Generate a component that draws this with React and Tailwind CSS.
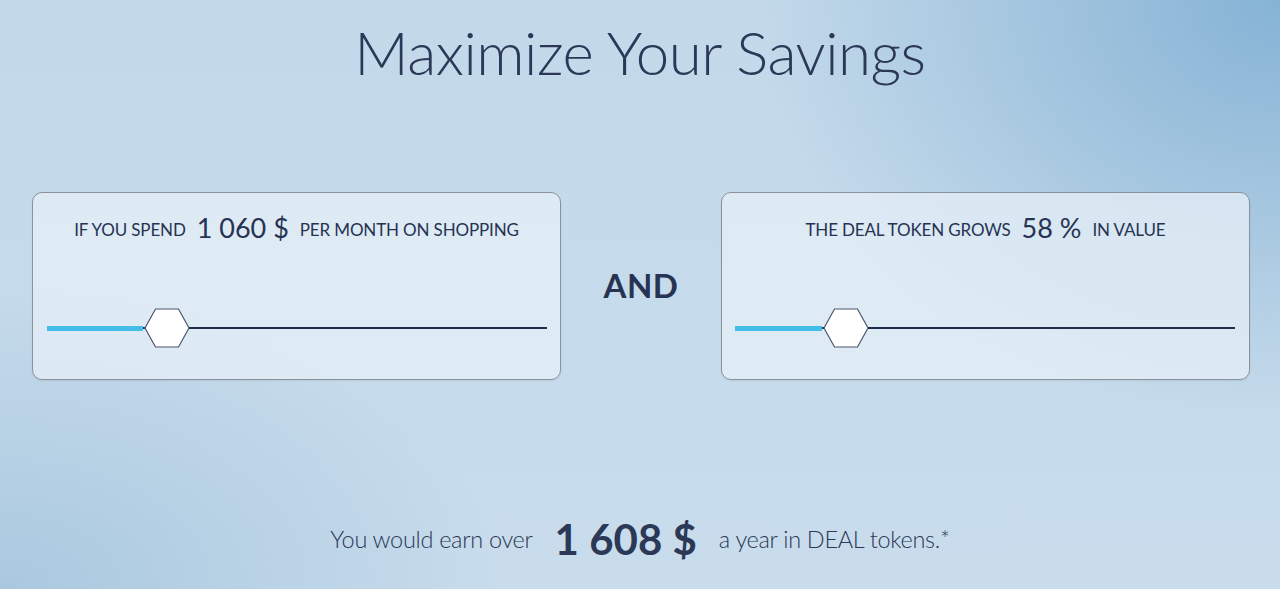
import React from 'react';

const Hexagon = () => (
  <svg width="46" height="40" viewBox="0 0 46 40" className="shrink-0 -mx-px">
    <polygon
      points="1,20 11.5,1 34.5,1 45,20 34.5,39 11.5,39"
      fill="#ffffff"
      stroke="#4a5570"
      strokeWidth="1.2"
    />
  </svg>
);

// Static slider: blue fill, hexagon thumb, dark rest of the track
const Slider = ({ filled }) => (
  <div className="flex items-center h-10">
    <div className="h-[5px] bg-[#45bde9]" style={{ width: filled }} />
    <div className="w-[2px] h-[2px] bg-[#1f2d4d]" />
    <Hexagon />
    <div className="flex-1 h-[2px] bg-[#1f2d4d]" />
  </div>
);

const Panel = ({ before, value, after, filled, trackPad }) => (
  <div className="w-[529px] h-[188px] rounded-[10px] border border-[#8b919b] bg-[#e4edf6]/80 shadow-[0_1px_2px_rgba(0,0,0,0.08)] flex flex-col">
    <div className="flex items-center justify-center gap-[11px] pt-[17px] text-[#273352]">
      <span className="text-[17px] tracking-[-0.15px] mt-[3px]">{before}</span>
      <span className="text-[27px] leading-[36px]">{value}</span>
      <span className="text-[17px] tracking-[-0.15px] mt-[3px]">{after}</span>
    </div>
    <div className={`mt-[62px] ${trackPad}`}>
      <Slider filled={filled} />
    </div>
  </div>
);

const App = () => {
  return (
    <div
      className="w-[1280px] h-[589px] overflow-hidden flex flex-col items-center bg-[#c7dbea] bg-[radial-gradient(ellipse_520px_420px_at_100%_0%,#86b3d5_0%,rgba(134,179,213,0.55)_45%,rgba(199,219,234,0)_100%),radial-gradient(ellipse_500px_300px_at_0%_100%,#a9c8df_0%,rgba(169,200,223,0)_100%),linear-gradient(180deg,#c3d9ea_0%,#c8dcec_100%)] text-[#273352]"
      style={{ fontFamily: 'Lato, "Open Sans", sans-serif' }}
    >
      <h1 className="mt-[12px] text-[60px] font-light leading-[80px] tracking-[-0.5px] text-[#2b3856]">
        Maximize Your Savings
      </h1>

      <div className="mt-[100px] w-full flex items-center justify-between pl-[32px] pr-[30px]">
        <Panel
          before="IF YOU SPEND"
          value="1 060 $"
          after="PER MONTH ON SHOPPING"
          filled={96}
          trackPad="pl-[14px] pr-[13px]"
        />
        <div className="text-[33px] font-bold tracking-[0.5px] text-[#273352] pb-[1px]">AND</div>
        <Panel
          before="THE DEAL TOKEN GROWS"
          value="58 %"
          after="IN VALUE"
          filled={87}
          trackPad="pl-[13px] pr-[14px]"
        />
      </div>

      <div className="mt-[133px] flex items-center gap-[22px] text-[#2b3856]">
        <span className="text-[23.5px] font-light tracking-[-0.3px] mt-[2px]">You would earn over</span>
        <span className="text-[42px] font-bold leading-[52px]">1 608 $</span>
        <span className="text-[23.5px] font-light tracking-[-0.3px] mt-[2px]">a year in DEAL tokens.*</span>
      </div>
    </div>
  );
};

export default App;
